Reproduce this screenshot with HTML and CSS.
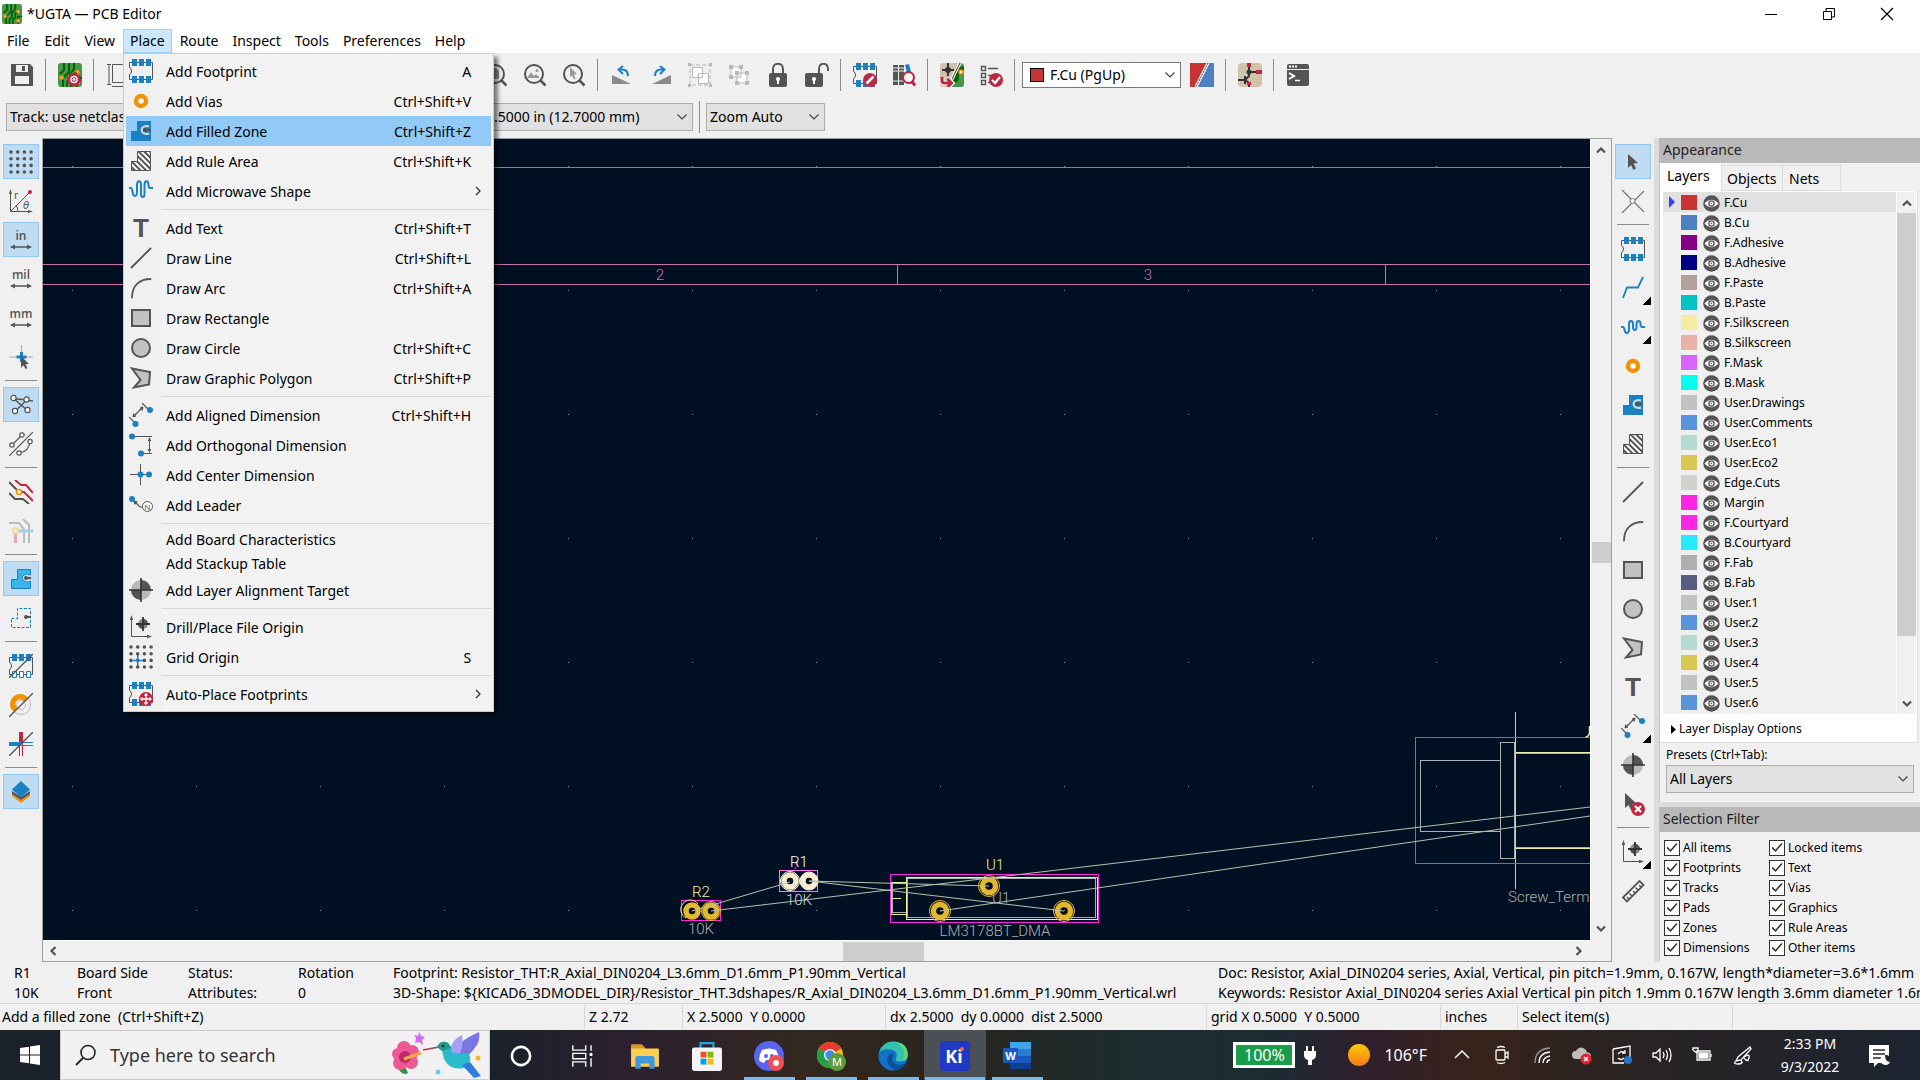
FILE: index.html
```html
<!DOCTYPE html>
<html lang="en">
<head>
<meta charset="utf-8">
<title>*UGTA — PCB Editor</title>
<link rel="stylesheet" href="styles.css">
</head>
<body>
<svg class="defs" aria-hidden="true">
  <defs>
    <pattern id="hatch" width="4" height="4" patternUnits="userSpaceOnUse" patternTransform="rotate(-45)"><rect width="4" height="4" fill="#fff"/><rect width="2" height="4" fill="#545454"/></pattern>
    <pattern id="griddots" x="29" y="27" width="124" height="124" patternUnits="userSpaceOnUse"><rect width="1" height="1" fill="#8a93a0"/></pattern>
  </defs>
  <symbol id="fp" viewBox="0 0 24 24"><path d="M.5 3.500H23.500V20.500H.5V15.500Q2.500 15 2.500 12T.5 8.500Z" fill="none" stroke="#545454"/><path fill="#1a81c4" d="M3 0h5v7H3zM10 0h5v7h-5zM17 0h5v7h-5zM3 17h5v7H3zM10 17h5v7h-5zM17 17h5v7h-5z"/></symbol>
  <symbol id="via" viewBox="0 0 24 24"><circle cx="12" cy="12" r="5" fill="#fff" stroke="#f39200" stroke-width="4.400"/></symbol>
  <symbol id="zone" viewBox="0 0 24 24"><path fill="#1a81c4" d="M2 12h6V2h14v20H2z"/><path d="M20 7.500a5 4 0 1 0 0 7" fill="none" stroke="#d5dbe0" stroke-width="2"/><circle cx="16" cy="11" r="2" fill="#545454"/><path d="M16 11h6" stroke="#545454" stroke-width="2"/></symbol>
  <symbol id="rule" viewBox="0 0 24 24"><path fill="url(#hatch)" stroke="#545454" d="M2.500 12.500h6v-10h13v19h-19z"/></symbol>
  <symbol id="wave" viewBox="0 0 24 24"><path fill="none" stroke="#1a81c4" stroke-width="2" d="M0 9h2c2 0 1 8 3.500 8S8 15 8 11V6c0-5 4-5 4 0v9c0 4 3.500 4 3.500 0V6c0-5 4-5 4 0v1c0 2 1 2 4.500 2"/></symbol>
  <symbol id="line" viewBox="0 0 24 24"><path d="M2.500 21.500l19-19" stroke="#545454" stroke-width="1.800" stroke-linecap="round"/></symbol>
  <symbol id="arc" viewBox="0 0 24 24"><path d="M3 21.500C3 9 11 3 21.500 3" fill="none" stroke="#545454" stroke-width="1.800" stroke-linecap="round"/></symbol>
  <symbol id="rect" viewBox="0 0 24 24"><path d="M3 4h18v16H3z" fill="#c2c2c2" stroke="#545454" stroke-width="2"/></symbol>
  <symbol id="circle" viewBox="0 0 24 24"><circle cx="12" cy="12" r="9" fill="#c2c2c2" stroke="#545454" stroke-width="2"/></symbol>
  <symbol id="poly" viewBox="0 0 24 24"><path d="M3 2.500L21 6l-1 12.500L5 21.500 11.500 14z" fill="#c2c2c2" stroke="#545454" stroke-width="2"/></symbol>
  <symbol id="dimA" viewBox="0 0 24 24"><path d="M4 14L14 4M0 14l7 7M13 0l7 7M4 14l1-3.500M4 14l3-1M14 4l-1 3.500M14 4l-3 1" fill="none" stroke="#545454" stroke-width="1.200"/><circle cx="21" cy="7" r="3" fill="#1a81c4"/><circle cx="6.500" cy="21" r="3" fill="#1a81c4"/></symbol>
  <symbol id="dimO" viewBox="0 0 24 24"><path d="M3 3.500h20M12 20.500h11" stroke="#545454"/><path d="M20.500 5v14" stroke="#545454"/><path d="M20.500 4l-1.800 4h3.600zM20.500 20l-1.800-4h3.600z" fill="#545454"/><circle cx="3" cy="3.500" r="3" fill="#1a81c4"/><circle cx="12" cy="20.500" r="3" fill="#1a81c4"/></symbol>
  <symbol id="dimC" viewBox="0 0 24 24"><path d="M11.500 1v21M1 11.500h20" stroke="#545454"/><circle cx="11.500" cy="11.500" r="3" fill="#1a81c4"/><circle cx="20" cy="11.500" r="3" fill="#1a81c4"/></symbol>
  <symbol id="target" viewBox="0 0 24 24"><circle cx="12" cy="12" r="10" fill="#b9b9b9"/><path fill="#545454" d="M12 2a10 10 0 0 1 10 10H12zM12 22A10 10 0 0 1 2 12h10z"/><path d="M12 0v24M0 12h24" stroke="#333" stroke-width="1.600"/></symbol>
  <symbol id="origin" viewBox="0 0 24 24"><path d="M2.500 2v19.500H21" fill="none" stroke="#545454"/><path d="M2.500 0L.800 5h3.400zM23 21.500l-5-1.700v3.400z" fill="#545454"/><circle cx="14" cy="9" r="5" fill="#8a8a8a"/><path d="M14 4a5 5 0 0 1 5 5h-5zM14 14a5 5 0 0 1-5-5h5z" fill="#545454"/><path d="M14 2v14M7 9h14" stroke="#333" stroke-width="1.800"/></symbol>
  <symbol id="dots" viewBox="0 0 24 24"><g stroke="#545454" stroke-width="3.600" stroke-linecap="round" stroke-dasharray="0 6.700"><path d="M2 2h21M2 8.700h21M2 15.400h21M2 22h21"/></g></symbol>
  <symbol id="gridorigin" viewBox="0 0 24 24"><g stroke="#545454" stroke-width="3.600" stroke-linecap="round" stroke-dasharray="0 6.700"><path d="M2 2h21M2 8.700h21M2 15.400h21M2 22h21"/></g><path d="M8.700 10v11M3.500 15.400h10.500" stroke="#1a81c4" stroke-width="1.500"/></symbol>
  <symbol id="autoplace" viewBox="0 0 24 24"><use href="#fp"/><circle cx="17" cy="17" r="7" fill="#bf2641"/><path d="M17 12v10M12 17h10M15.500 13.500L17 12l1.500 1.500M15.500 20.500L17 22l1.500-1.500M13.500 15.500L12 17l1.500 1.500M20.500 15.500L22 17l-1.500 1.500" stroke="#fff" stroke-width="1.300" fill="none"/></symbol>
  <symbol id="arrow" viewBox="0 0 24 24"><path fill="#545454" d="M7 4l10 9-4.500.6 2.500 5-2.600 1.300-2.300-5L7 18z"/></symbol>
  <symbol id="mag" viewBox="0 0 24 24"><circle cx="11" cy="11" r="9" fill="none" stroke="#545454" stroke-width="2"/><path d="M17.500 17.500l5 5" stroke="#545454" stroke-width="2.500"/></symbol>
  <symbol id="pcb" viewBox="0 0 24 24"><rect width="24" height="24" rx="3" fill="#489648"/><path d="M6 0v7L2 11M11 0v9l-6 6v9M16 0v6l-4 5v5l-3 3v5M22 8l-6 3v5l-3 3v5M24 15h-5v9" fill="none" stroke="#006400" stroke-width="2"/><g fill="#fff" stroke="#d38b12" stroke-width="1.800"><circle cx="3.500" cy="14.500" r="1.700"/><circle cx="19.500" cy="9" r="1.700"/><circle cx="19.500" cy="20" r="1.700"/></g></symbol>
  <symbol id="eye" viewBox="0 0 17 17"><circle cx="8.500" cy="8.500" r="8.300" fill="#545454"/><path d="M1.500 8.500Q8.500 1 15.500 8.500 8.500 16 1.500 8.500z" fill="#fff"/><circle cx="8.500" cy="8.500" r="2.600" fill="#fff" stroke="#545454" stroke-width="1.300"/><circle cx="8.500" cy="8.500" r=".8" fill="#545454"/></symbol>
  <symbol id="down" viewBox="0 0 12 12"><path d="M1.500 3.500L6 8l4.500-4.500" fill="none" stroke="#444" stroke-width="1.200"/></symbol>
  <symbol id="sb" viewBox="0 0 12 12"><path d="M2 3.500L6 7.500l4-4" fill="none" stroke="#505050" stroke-width="2.200"/></symbol>
  <symbol id="arrows" viewBox="0 0 24 24"><path d="M3 19h18" stroke="#545454" stroke-width="1.500"/><path d="M1 19l5-2.500v5zM23 19l-5-2.500v5z" fill="#545454"/></symbol>
</svg>

<div class="app">
<header class="titlebar">
  <svg class="appicon"><use href="#pcb"/></svg>
  <h1>*UGTA — PCB Editor</h1>
  <button aria-label="Minimize"><svg viewBox="0 0 14 14"><path d="M1 7.500h12" stroke="#000"/></svg></button>
  <button aria-label="Restore"><svg viewBox="0 0 14 14"><path d="M1.500 4.500h8v8h-8zM4 4.500V1.500h8.500v8.500H10" fill="none" stroke="#000"/></svg></button>
  <button aria-label="Close"><svg viewBox="0 0 14 14"><path d="M1 1l12 12M13 1L1 13" stroke="#000" stroke-width="1.200"/></svg></button>
</header>

<nav class="menubar">
  <button>File</button><button>Edit</button><button>View</button>
  <div class="menuhost">
    <button class="open">Place</button>
    <div class="menu" role="menu">
      <button role="menuitem"><svg><use href="#fp"/></svg><span>Add Footprint</span><kbd>A</kbd></button>
      <button role="menuitem"><svg><use href="#via"/></svg><span>Add Vias</span><kbd>Ctrl+Shift+V</kbd></button>
      <button role="menuitem" class="hot"><svg><use href="#zone"/></svg><span>Add Filled Zone</span><kbd>Ctrl+Shift+Z</kbd></button>
      <button role="menuitem"><svg><use href="#rule"/></svg><span>Add Rule Area</span><kbd>Ctrl+Shift+K</kbd></button>
      <button role="menuitem" class="sub"><svg><use href="#wave"/></svg><span>Add Microwave Shape</span><svg class="more" viewBox="0 0 12 12"><path d="M4 2l4 4-4 4" fill="none" stroke="#333" stroke-width="1.300"/></svg></button>
      <hr>
      <button role="menuitem"><svg viewBox="0 0 24 24"><text class="bigt" x="12" y="21">T</text></svg><span>Add Text</span><kbd>Ctrl+Shift+T</kbd></button>
      <button role="menuitem"><svg><use href="#line"/></svg><span>Draw Line</span><kbd>Ctrl+Shift+L</kbd></button>
      <button role="menuitem"><svg><use href="#arc"/></svg><span>Draw Arc</span><kbd>Ctrl+Shift+A</kbd></button>
      <button role="menuitem"><svg><use href="#rect"/></svg><span>Draw Rectangle</span></button>
      <button role="menuitem"><svg><use href="#circle"/></svg><span>Draw Circle</span><kbd>Ctrl+Shift+C</kbd></button>
      <button role="menuitem"><svg><use href="#poly"/></svg><span>Draw Graphic Polygon</span><kbd>Ctrl+Shift+P</kbd></button>
      <hr>
      <button role="menuitem"><svg><use href="#dimA"/></svg><span>Add Aligned Dimension</span><kbd>Ctrl+Shift+H</kbd></button>
      <button role="menuitem"><svg><use href="#dimO"/></svg><span>Add Orthogonal Dimension</span></button>
      <button role="menuitem"><svg><use href="#dimC"/></svg><span>Add Center Dimension</span></button>
      <button role="menuitem"><svg viewBox="0 0 24 24"><path d="M5 8l6 6h3M5 8l1 3.500M5 8l3.500 1" fill="none" stroke="#545454" stroke-width="1.200"/><circle cx="3" cy="6" r="3" fill="#1a81c4"/><circle cx="18.500" cy="13.500" r="5" fill="#fff" stroke="#545454"/><text x="18.500" y="16.500" text-anchor="middle" font-family="Liberation Sans, sans-serif" font-size="8" fill="#545454">N</text></svg><span>Add Leader</span></button>
      <hr>
      <button role="menuitem" class="plain"><svg></svg><span>Add Board Characteristics</span></button>
      <button role="menuitem" class="plain"><svg></svg><span>Add Stackup Table</span></button>
      <button role="menuitem"><svg><use href="#target"/></svg><span>Add Layer Alignment Target</span></button>
      <hr>
      <button role="menuitem"><svg><use href="#origin"/></svg><span>Drill/Place File Origin</span></button>
      <button role="menuitem"><svg><use href="#gridorigin"/></svg><span>Grid Origin</span><kbd>S</kbd></button>
      <hr>
      <button role="menuitem" class="sub"><svg><use href="#autoplace"/></svg><span>Auto-Place Footprints</span><svg class="more" viewBox="0 0 12 12"><path d="M4 2l4 4-4 4" fill="none" stroke="#333" stroke-width="1.300"/></svg></button>
    </div>
  </div>
  <button>Route</button><button>Inspect</button><button>Tools</button><button>Preferences</button><button>Help</button>
</nav>

<div class="toolbar">
  <button aria-label="Save"><svg viewBox="0 0 24 24"><path fill="#545454" d="M1 1h19l3 3v19H1z"/><path fill="#f0f0f0" d="M6 2h12v7H6zM5 13h14v8H5z"/><path fill="#545454" d="M12 3h3v5h-3z"/></svg></button>
  <i class="sep"></i>
  <button aria-label="Board setup"><svg viewBox="0 0 24 24"><use href="#pcb"/><circle cx="16" cy="16.500" r="5" fill="#fff" stroke="#bf2641" stroke-width="2.500"/><circle cx="16" cy="16.500" r="6.500" fill="none" stroke="#bf2641" stroke-width="2" stroke-dasharray="2.500 2.600"/><circle cx="16" cy="16.500" r="2" fill="#f0f0f0" stroke="#bf2641"/></svg></button>
  <i class="sep"></i>
  <button aria-label="Page settings"><svg viewBox="0 0 24 24"><path d="M1 1.500h4M3 1.500v20M1 21.500h4M6.500 1.500h10l5 5v13h-15zM6 23.500h16" fill="none" stroke="#545454"/></svg></button>
  <button aria-label="Print"><svg><use href="#rect"/></svg></button>
  <button aria-label="Plot"><svg><use href="#rect"/></svg></button>
  <i class="sep"></i>
  <button aria-label="Undo"><svg><use href="#arc"/></svg></button>
  <button aria-label="Redo"><svg><use href="#arc"/></svg></button>
  <i class="sep"></i>
  <button aria-label="Find"><svg><use href="#mag"/></svg></button>
  <i class="sep"></i>
  <button aria-label="Refresh"><svg><use href="#circle"/></svg></button>
  <button aria-label="Zoom in"><svg><use href="#mag"/></svg></button>
  <button aria-label="Zoom out"><svg><use href="#mag"/></svg></button>
  <button aria-label="Zoom to fit"><svg viewBox="0 0 24 24"><use href="#mag"/><path fill="#8a8a8a" d="M7 5h5l3 3v8H7z"/></svg></button>
  <button aria-label="Zoom to objects"><svg viewBox="0 0 24 24"><use href="#mag"/><path fill="#999" d="M4 15l4-6 3 4 2-2 4 4z"/><circle cx="14" cy="7.500" r="1.500" fill="#999"/></svg></button>
  <button aria-label="Zoom to selection"><svg viewBox="0 0 24 24"><use href="#mag"/><path fill="#999" d="M8 4l7 7-3 .4 1.600 4-1.800.8-1.700-3.800L8 14z"/></svg></button>
  <i class="sep"></i>
  <button aria-label="Rotate counterclockwise"><svg viewBox="0 0 24 24"><path fill="#8a8a8a" d="M2 12v9h19z"/><path d="M18 13C18 7 14 6 10 6.500" fill="none" stroke="#1a81c4" stroke-width="2"/><path fill="none" stroke="#1a81c4" stroke-width="2" d="M13 3L8.500 6.500 13 11"/></svg></button>
  <button aria-label="Rotate clockwise"><svg viewBox="0 0 24 24"><path fill="#8a8a8a" d="M22 12v9H3z"/><path d="M6 13C6 7 10 6 14 6.500" fill="none" stroke="#1a81c4" stroke-width="2"/><path fill="none" stroke="#1a81c4" stroke-width="2" d="M11 3l4.500 3.500L11 11"/></svg></button>
  <button aria-label="Group"><svg viewBox="0 0 24 24"><path d="M2 2h20v20H2z" fill="none" stroke="#b9b9b9" stroke-dasharray="4 2"/><path d="M4.500 4.500h10v10h-10zM10.500 10.500h10v10h-10z" fill="#fff" stroke="#b9b9b9"/><path fill="#b9b9b9" d="M0 0h3v3H0zM21 0h3v3h-3zM0 21h3v3H0zM21 21h3v3h-3z"/></svg></button>
  <button aria-label="Ungroup"><svg viewBox="0 0 24 24"><path d="M4 4h10v10H4zM10 10h10v10H10z" fill="#fff" stroke="#b9b9b9"/><path fill="#b9b9b9" d="M2 2h4v4H2zM12 2h4v4h-4zM2 12h4v4H2zM8 8h4v4H8zM18 8h4v4h-4zM8 18h4v4H8zM18 18h4v4h-4z"/></svg></button>
  <button aria-label="Lock"><svg viewBox="0 0 24 24"><rect x="3" y="10" width="18" height="14" rx="2" fill="#545454"/><path d="M7 11V6c0-7 10-7 10 0v5" fill="none" stroke="#545454" stroke-width="2"/><circle cx="12" cy="16" r="2" fill="#fff"/><path d="M12 16v5" stroke="#fff" stroke-width="2"/></svg></button>
  <button aria-label="Unlock"><svg viewBox="0 0 24 24"><rect x="0" y="10" width="18" height="14" rx="2" fill="#545454"/><path d="M14 11V6c0-7 9-7 9 0v2" fill="none" stroke="#545454" stroke-width="2"/><circle cx="9" cy="16" r="2" fill="#fff"/><path d="M9 16v5" stroke="#fff" stroke-width="2"/></svg></button>
  <i class="sep"></i>
  <button aria-label="Footprint editor"><svg viewBox="0 0 24 24"><use href="#fp"/><circle cx="17" cy="17" r="7" fill="#bf2641"/><path d="M13.500 20.500l7-7" stroke="#fff" stroke-width="2.500"/></svg></button>
  <button aria-label="Footprint browser"><svg viewBox="0 0 24 24"><path fill="#545454" d="M1 2h5v20H1zM7 2h5v20H7z"/><path fill="#1a81c4" d="M13 2l4-1 5 19-4 1z"/><path d="M1 5h11M1 8h11M1 18h11" stroke="#f0f0f0"/><circle cx="16.500" cy="14.500" r="5.500" fill="#f5f5f5" stroke="#bf2641" stroke-width="2"/><path d="M20 18.500l3 4" stroke="#bf2641" stroke-width="3"/></svg></button>
  <i class="sep"></i>
  <button aria-label="Update from schematic"><svg viewBox="0 0 24 24"><rect width="24" height="24" rx="3" fill="#d0c3ab"/><path d="M24 2v19a3 3 0 0 1-3 3H9L21 0z" fill="#489648"/><path d="M24 5l-7 3v8l-4 4" stroke="#006400" stroke-width="4" fill="none"/><path d="M8 0v13M2 7h12" stroke="#333" stroke-width="2"/><circle cx="8" cy="7" r="3" fill="#333"/><path d="M20 0L8 24" stroke="#fff" stroke-width="3"/><path d="M20 0L8 24" stroke="#333"/><circle cx="21" cy="9" r="2" fill="#fff" stroke="#f39200" stroke-width="1.600"/><path d="M2 15v3q0 2 3 2h6M8 16l4 4-4 4" stroke="#fff" stroke-width="5" fill="none"/><path d="M2 14v4q0 2 3 2h6M7.500 16l4 4-4 4" stroke="#bf2641" stroke-width="3" fill="none"/></svg></button>
  <button aria-label="Design rules checker"><svg viewBox="0 0 24 24"><path d="M2.500 3.500h4v4h-4zM2.500 10.500h4v4h-4zM2.500 17.500h4v4h-4zM9 5.500h10M9 12.500h6M9 19.500h3" fill="none" stroke="#545454" stroke-width="1.400"/><circle cx="17" cy="17" r="7" fill="#bf2641"/><path d="M13 17l3 3 5-6" fill="none" stroke="#fff" stroke-width="2.200"/></svg></button>
  <i class="sep"></i>
  <label class="combo layer"><i class="chip"></i><select aria-label="Active layer"><option>F.Cu (PgUp)</option></select><svg><use href="#down"/></svg></label>
  <button aria-label="Layer pair"><svg viewBox="0 0 24 24"><path fill="#c83434" d="M0 0h18L6 24H0z"/><path fill="#4d7fc4" d="M18 0h6v24H6z"/><path d="M18 0L6 24" stroke="#fff" stroke-width="3"/><path d="M18 0L6 24" stroke="#333" stroke-dasharray="2 1"/></svg></button>
  <i class="sep"></i>
  <button aria-label="Schematic editor"><svg viewBox="0 0 24 24"><rect width="24" height="24" rx="4" fill="#d0c3ab"/><path d="M11 0v9M11 9h8M11 9v4l-4 4H0M7 13v8M7 17l4 3v4" stroke="#333" stroke-width="2" fill="none"/><circle cx="11" cy="9" r="2.500" fill="#333"/><path fill="#bf2641" d="M9 0h4v4H9zM18 7h6v4h-6zM9 19h4v3H9z"/></svg></button>
  <i class="sep"></i>
  <button aria-label="Scripting console"><svg viewBox="0 0 24 24"><path fill="#545454" d="M1 3q0-2 2-2h18q2 0 2 2v3H1zM1 7h22v14q0 2-2 2H3q-2 0-2-2z"/><path d="M3 3.500h8" stroke="#fff" stroke-width="2" stroke-dasharray="2 1"/><path d="M3 10l5 3-5 3" fill="none" stroke="#fff" stroke-width="2"/><path d="M9 17.500h5" stroke="#fff" stroke-width="1.500"/></svg></button>
</div>

<div class="toolbar second">
  <label class="combo track"><select aria-label="Track width"><option>Track: use netclass width</option></select><svg><use href="#down"/></svg></label>
  <label class="combo viasize"><select aria-label="Via size"><option>Via: use netclass sizes</option></select><svg><use href="#down"/></svg></label>
  <button aria-label="Automatic track width"><svg><use href="#line"/></svg></button>
  <i class="sep"></i>
  <label class="combo gridsize"><select aria-label="Grid"><option>0.5000 in (12.7000 mm)</option></select><svg><use href="#down"/></svg></label>
  <i class="sep"></i>
  <label class="combo zoom"><select aria-label="Zoom"><option>Zoom Auto</option></select><svg><use href="#down"/></svg></label>
</div>

<main class="workspace">
  <aside class="tools">
    <button class="on" aria-label="Show grid"><svg><use href="#dots"/></svg></button>
    <button aria-label="Polar coordinates"><svg viewBox="0 0 24 24"><path d="M1.500 2v20.500H22M2 22L20 4M9 22.500q0-4-2-6" fill="none" stroke="#545454"/><path d="M1.500 0L0 5h3zM24 22.500l-5-1.500v3z" fill="#545454"/><circle cx="21" cy="3" r="2" fill="#bf2641"/><text x="5" y="10" font-family="DejaVu Sans, sans-serif" font-size="10" fill="#545454">r</text><text x="14" y="20" font-family="DejaVu Sans, sans-serif" font-size="10" font-style="italic" fill="#545454">θ</text></svg></button>
    <button class="on" aria-label="Inches"><svg viewBox="0 0 24 24"><text class="unit" x="12" y="12">in</text><use href="#arrows"/></svg></button>
    <button aria-label="Mils"><svg viewBox="0 0 24 24"><text class="unit" x="12" y="12">mil</text><use href="#arrows"/></svg></button>
    <button aria-label="Millimeters"><svg viewBox="0 0 24 24"><text class="unit" x="12" y="12">mm</text><use href="#arrows"/></svg></button>
    <button aria-label="Full-window crosshairs"><svg viewBox="0 0 24 24"><path d="M12.500 0v23M0 12h24" stroke="#aaa"/><path d="M12.500 7v10M7.500 12h10" stroke="#1a81c4" stroke-width="3"/><path fill="#545454" d="M12 11l8 8-3.500.3 2 4-2 .7-1.800-3.500L12 22z"/></svg></button>
    <i class="sep"></i>
    <button class="on" aria-label="Show ratsnest"><svg viewBox="0 0 24 24"><path d="M4.500 5.500L17.500 7l7 1M17.500 7L6 18.500M4.500 5.500L18.500 17.500" stroke="#545454" stroke-width="1.400"/><g fill="#fff" stroke="#545454" stroke-width="1.200"><circle cx="4.500" cy="5" r="2.600"/><circle cx="17.500" cy="6.500" r="2.600"/><circle cx="6" cy="18" r="2.600"/><circle cx="18.500" cy="17" r="2.600"/></g></svg></button>
    <button aria-label="Curved ratsnest"><svg viewBox="0 0 24 24"><path d="M0 24L24 0M3 13L13 3M10 21Q20 20 21 9" fill="none" stroke="#545454" stroke-width="1.200"/><g fill="#fff" stroke="#545454" stroke-width="1.200"><circle cx="3" cy="13" r="2.200"/><circle cx="13" cy="3" r="2.200"/><circle cx="21" cy="9.500" r="2.200"/><circle cx="10" cy="21" r="2.200"/></g></svg></button>
    <i class="sep"></i>
    <button aria-label="High contrast layers"><svg viewBox="0 0 24 24"><g fill="none" stroke-width="2"><path d="M0 2l10 10M0 13l6 6h8l6 5" stroke="#545454"/><path d="M6 0l6 5h5l7 8M10 12h5l9 9" stroke="#bf2641"/></g><circle cx="10" cy="12" r="2.500" fill="#fff" stroke="#f39200" stroke-width="1.600"/></svg></button>
    <button aria-label="Net highlight"><svg viewBox="0 0 24 24"><g fill="none" stroke-width="2" stroke="#bbb"><path d="M0 4h10l5 6v14M14 0l6 6v18"/><path d="M7 12h17" stroke="#a2cfea" stroke-width="3"/><path d="M6.500 13v11" stroke="#e9a7b3" stroke-width="3"/></g><circle cx="6.500" cy="11.500" r="2.500" fill="#fff" stroke="#fad399" stroke-width="2"/></svg></button>
    <i class="sep"></i>
    <button class="on" aria-label="Fill zones"><svg viewBox="0 0 24 24"><path fill="#39b4ea" stroke="#1a81c4" d="M2.500 12.500h6v-10h13v5.500a5 4 0 1 0 0 6v7.500h-19z"/><circle cx="17" cy="11" r="2" fill="#545454"/><path d="M17 11h5" stroke="#545454" stroke-width="2"/></svg></button>
    <button aria-label="Zone outlines"><svg viewBox="0 0 24 24"><path fill="none" stroke="#1a81c4" stroke-dasharray="3 1.500" d="M2.500 12.500h6v-10h13v19h-19z"/><circle cx="17" cy="11" r="2" fill="#545454"/><path d="M17 11h5" stroke="#545454" stroke-width="2"/></svg></button>
    <i class="sep"></i>
    <button aria-label="Sketch pads"><svg viewBox="0 0 24 24"><path d="M.5 3.500H23.500V20.500H.5V15.500Q2.500 15 2.500 12T.5 8.500Z" fill="none" stroke="#545454"/><path fill="#1a81c4" d="M3 0h5v7H3zM10 0h5v7h-5zM17 0h5v7h-5z"/><path fill="#fff" stroke="#1a81c4" d="M3.500 17.500h4v6h-4zM10.500 17.500h4v6h-4zM17.500 17.500h4v6h-4z"/><path d="M0 24L24 0" stroke="#545454" stroke-width="1.300"/></svg></button>
    <button aria-label="Sketch vias"><svg viewBox="0 0 24 24"><circle cx="12" cy="12" r="9.500" fill="none" stroke="#bbb"/><circle cx="12" cy="12" r="4.500" fill="none" stroke="#bbb"/><path d="M5 19A10 10 0 1 1 19 5l-4 4a4.500 4.500 0 1 0-6 6z" fill="#f39200"/><path d="M0 24L24 0" stroke="#545454" stroke-width="1.300"/></svg></button>
    <button aria-label="Sketch tracks"><svg viewBox="0 0 24 24"><path d="M12 0v12" stroke="#bf2641" stroke-width="4"/><path d="M10.500 12v12M13.500 12v12" stroke="#bf2641"/><path d="M0 12h12" stroke="#1a81c4" stroke-width="4"/><path d="M12 10.500h12M12 13.500h12" stroke="#1a81c4"/><path d="M0 24L24 0" stroke="#545454" stroke-width="1.300"/></svg></button>
    <i class="sep"></i>
    <button class="on" aria-label="Appearance manager"><svg viewBox="0 0 24 24"><path fill="#f39200" d="M3 14v2l9 7 9-7v-2l-9 6z"/><path fill="#545454" d="M3 11v3l9 6 9-6v-3l-9 6z"/><path fill="#1a81c4" d="M12 1l9 8.500-9 8-9-8z"/></svg></button>
  </aside>

  <section class="view">
    <svg class="board" role="img" aria-label="Board canvas">
      <rect width="100%" height="100%" fill="url(#griddots)"/>
      <g transform="translate(-43 -139)" fill="none" shape-rendering="crispEdges">
        <path d="M43 167.500H3000" stroke="#7f8790"/>
        <path d="M43 264.500H3000M43 284.500H3000M897.500 264v20M1385.500 264v20" stroke="#c872a0"/>
      </g>
      <g transform="translate(-43 -139)" fill="none">
        <g class="silk" text-anchor="middle"><text x="660" y="280" fill="#c872a0">2</text><text x="1148" y="280" fill="#c872a0">3</text></g>
        <g shape-rendering="crispEdges">
          <path d="M1500 760.500h-79.500v71H1500M1500.500 742.500h14v116h-14zM1516 753.500h400M1516 847.500h400" stroke="#afafaf"/>
          <path d="M1515.500 712v177" stroke="#c3ccd2"/>
          <path d="M1516 752.500h400M1516 848.500h400" stroke="#f2eda1"/>
          <path d="M1915 737.500h-499.500v126H1915" stroke="#e32bd6"/>
          <path d="M907.500 878.500h188v39h-188zM892.500 883.500h14v29h-14z" stroke="#afafaf"/>
          <path d="M906.500 877.500h191v42h-191zM891.500 882.500h15v32h-15zM892 898.500h9" stroke="#f2eda1"/>
          <path d="M890.500 874.500h208v48h-208zM681.500 900.500h39v20h-39z" stroke="#ff26e2"/>
          <path d="M779.500 870.500h38v21h-38z" stroke="#f67af0"/>
        </g>
        <g stroke="#e3b72e" stroke-width="5.500"><circle cx="692" cy="911" r="6"/><circle cx="711" cy="911" r="6"/><circle cx="940" cy="911" r="6.500"/><circle cx="989" cy="886" r="6.500"/><circle cx="1064" cy="911" r="6.500"/></g>
        <g stroke="#e3b72e"><circle cx="711" cy="911" r="9.500"/><circle cx="940" cy="911" r="10.500"/><circle cx="989" cy="886" r="10.500"/><circle cx="1064" cy="911" r="10.500"/></g>
        <path d="M686 918a9.500 9.500 0 1 1 12-14" stroke="#f2eda1"/>
        <g stroke="#fbeccb" stroke-width="5.500"><circle cx="790" cy="881" r="6"/><circle cx="809" cy="881" r="6"/></g>
        <g stroke="#fff"><circle cx="790" cy="881" r="9.500"/><circle cx="809" cy="881" r="9"/></g>
        <path d="M798 862l-4 9M794 890l4 8" stroke="#ff26e2" stroke-dasharray="3 2"/>
        <path d="M692 911l98-29M711 911L1590 807l340-40M940 911l650-95 340-49M809 881l180 5M809 881l255 30" stroke="#b4c2ac"/>
        <path d="M1589.500 726v7q-1 4-4 4" stroke="#f2eda1" stroke-width="1.500"/>
        <g class="silk" text-anchor="middle">
          <text x="701" y="897" fill="#f2eda1">R2</text><text x="701" y="934" fill="#afafaf">10K</text>
          <text x="799" y="867" fill="#fff">R1</text><text x="799" y="905" fill="#d8d8d8">10K</text>
          <text x="995" y="870" fill="#f2eda1">U1</text><text x="1001" y="903" fill="#afafaf">U1</text>
          <text x="995" y="936" fill="#afafaf">LM3178BT_DMA</text>
        </g>
        <text class="silk" x="1508" y="902" fill="#afafaf">Screw_Term</text>
      </g>
    </svg>
    <div class="vbar"><svg class="up"><use href="#sb"/></svg><i></i><svg><use href="#sb"/></svg></div>
    <div class="hbar"><svg class="left"><use href="#sb"/></svg><i></i><svg class="right"><use href="#sb"/></svg></div>
  </section>

  <aside class="tools">
    <button class="on" aria-label="Select"><svg><use href="#arrow"/></svg></button>
    <button aria-label="Local ratsnest"><svg viewBox="0 0 24 24"><path d="M1 1l22 22M23 2L1 24" stroke="#777" stroke-width="1.200"/><circle cx="11.500" cy="12" r="2.500" fill="#fff" stroke="#777"/></svg></button>
    <i class="sep"></i>
    <button aria-label="Add footprint"><svg><use href="#fp"/></svg></button>
    <button class="fly" aria-label="Route tracks"><svg viewBox="0 0 24 24"><path d="M2 22l4-10.500h11L22 1" fill="none" stroke="#1a81c4" stroke-width="1.800"/></svg></button>
    <button class="fly" aria-label="Tune length"><svg viewBox="0 0 24 24"><path fill="none" stroke="#1a81c4" stroke-width="2" d="M0 12h2c2 0 1 6 3.500 6S8 16 8 13V9c0-4 4-4 4 0v3c0 4 3.500 4 3.500 0V9c0-4 4-4 4 0v1c0 2 1 2 4.500 2"/></svg></button>
    <button aria-label="Add vias"><svg><use href="#via"/></svg></button>
    <button aria-label="Add filled zone"><svg><use href="#zone"/></svg></button>
    <button aria-label="Add rule area"><svg><use href="#rule"/></svg></button>
    <i class="sep"></i>
    <button aria-label="Draw line"><svg><use href="#line"/></svg></button>
    <button aria-label="Draw arc"><svg><use href="#arc"/></svg></button>
    <button aria-label="Draw rectangle"><svg><use href="#rect"/></svg></button>
    <button aria-label="Draw circle"><svg><use href="#circle"/></svg></button>
    <button aria-label="Draw polygon"><svg><use href="#poly"/></svg></button>
    <button aria-label="Add text"><svg viewBox="0 0 24 24"><text class="bigt" x="12" y="21">T</text></svg></button>
    <button class="fly" aria-label="Add dimension"><svg><use href="#dimA"/></svg></button>
    <button aria-label="Add alignment target"><svg><use href="#target"/></svg></button>
    <button aria-label="Delete"><svg viewBox="0 0 24 24"><path fill="#545454" d="M4 1l12 11-5 .5 2 4-3 1.500-2.500-5L4 16z"/><circle cx="17" cy="17" r="7" fill="#bf2641"/><path d="M14 14l6 6M20 14l-6 6" stroke="#fff" stroke-width="2.200"/></svg></button>
    <i class="sep"></i>
    <button class="fly" aria-label="Set origin"><svg><use href="#origin"/></svg></button>
    <button aria-label="Measure"><svg viewBox="0 0 24 24"><path d="M2 18.500L18.500 2 22.500 6 6 22.500z" fill="#fff" stroke="#545454" stroke-width="1.800"/><path d="M8 20l-2-2M11 17l-2.500-2.500M14 14l-2-2M17 11l-2.500-2.500M20 8l-2-2" stroke="#545454" stroke-width="1.500"/></svg></button>
  </aside>

  <aside class="dock">
    <h2>Appearance</h2>
    <div class="appearance">
      <div class="tabs" role="tablist"><button role="tab" class="sel">Layers</button><button role="tab">Objects</button><button role="tab">Nets</button></div>
      <div class="page">
        <div class="listbox">
          <ul class="layers">
            <li class="cur"><i style="background:#c83434"></i><svg><use href="#eye"/></svg>F.Cu</li>
            <li><i style="background:#4d7fc4"></i><svg><use href="#eye"/></svg>B.Cu</li>
            <li><i style="background:#840084"></i><svg><use href="#eye"/></svg>F.Adhesive</li>
            <li><i style="background:#000084"></i><svg><use href="#eye"/></svg>B.Adhesive</li>
            <li><i style="background:#b4a09a"></i><svg><use href="#eye"/></svg>F.Paste</li>
            <li><i style="background:#00c2c2"></i><svg><use href="#eye"/></svg>B.Paste</li>
            <li><i style="background:#f2eda1"></i><svg><use href="#eye"/></svg>F.Silkscreen</li>
            <li><i style="background:#e8b2a7"></i><svg><use href="#eye"/></svg>B.Silkscreen</li>
            <li><i style="background:#d864ff"></i><svg><use href="#eye"/></svg>F.Mask</li>
            <li><i style="background:#02ffee"></i><svg><use href="#eye"/></svg>B.Mask</li>
            <li><i style="background:#c2c2c2"></i><svg><use href="#eye"/></svg>User.Drawings</li>
            <li><i style="background:#5994dc"></i><svg><use href="#eye"/></svg>User.Comments</li>
            <li><i style="background:#b4dbd2"></i><svg><use href="#eye"/></svg>User.Eco1</li>
            <li><i style="background:#d8c852"></i><svg><use href="#eye"/></svg>User.Eco2</li>
            <li><i style="background:#d0d2cd"></i><svg><use href="#eye"/></svg>Edge.Cuts</li>
            <li><i style="background:#ff26e2"></i><svg><use href="#eye"/></svg>Margin</li>
            <li><i style="background:#ff26e2"></i><svg><use href="#eye"/></svg>F.Courtyard</li>
            <li><i style="background:#26e9ff"></i><svg><use href="#eye"/></svg>B.Courtyard</li>
            <li><i style="background:#afafaf"></i><svg><use href="#eye"/></svg>F.Fab</li>
            <li><i style="background:#585d84"></i><svg><use href="#eye"/></svg>B.Fab</li>
            <li><i style="background:#c2c2c2"></i><svg><use href="#eye"/></svg>User.1</li>
            <li><i style="background:#5994dc"></i><svg><use href="#eye"/></svg>User.2</li>
            <li><i style="background:#b4dbd2"></i><svg><use href="#eye"/></svg>User.3</li>
            <li><i style="background:#d8c852"></i><svg><use href="#eye"/></svg>User.4</li>
            <li><i style="background:#c2c2c2"></i><svg><use href="#eye"/></svg>User.5</li>
            <li><i style="background:#5994dc"></i><svg><use href="#eye"/></svg>User.6</li>
          </ul>
          <div class="lbar"><svg class="up"><use href="#sb"/></svg><i></i><svg><use href="#sb"/></svg></div>
        </div>
        <button class="expander"><svg viewBox="0 0 5 9"><path d="M0 0l5 4.500L0 9z"/></svg>Layer Display Options</button>
      </div>
      <label class="presetlabel" for="preset">Presets (Ctrl+Tab):</label>
      <div class="combo preset"><select id="preset"><option>All Layers</option></select><svg><use href="#down"/></svg></div>
    </div>
    <h2 class="filterhead">Selection Filter</h2>
    <div class="filter">
      <label><input type="checkbox" checked>All items</label><label><input type="checkbox" checked>Locked items</label>
      <label><input type="checkbox" checked>Footprints</label><label><input type="checkbox" checked>Text</label>
      <label><input type="checkbox" checked>Tracks</label><label><input type="checkbox" checked>Vias</label>
      <label><input type="checkbox" checked>Pads</label><label><input type="checkbox" checked>Graphics</label>
      <label><input type="checkbox" checked>Zones</label><label><input type="checkbox" checked>Rule Areas</label>
      <label><input type="checkbox" checked>Dimensions</label><label><input type="checkbox" checked>Other items</label>
    </div>
  </aside>
</main>

<section class="info">
  <div>R1<br>10K</div>
  <div>Board Side<br>Front</div>
  <div>Status:<br>Attributes:</div>
  <div>Rotation<br>0</div>
  <div>Footprint: Resistor_THT:R_Axial_DIN0204_L3.6mm_D1.6mm_P1.90mm_Vertical<br>3D-Shape: ${KICAD6_3DMODEL_DIR}/Resistor_THT.3dshapes/R_Axial_DIN0204_L3.6mm_D1.6mm_P1.90mm_Vertical.wrl</div>
  <div>Doc: Resistor, Axial_DIN0204 series, Axial, Vertical, pin pitch=1.9mm, 0.167W, length*diameter=3.6*1.6mm<br>Keywords: Resistor Axial_DIN0204 series Axial Vertical pin pitch 1.9mm 0.167W length 3.6mm diameter 1.6mm</div>
</section>

<footer class="status"><span>Add a filled zone  (Ctrl+Shift+Z)</span><span>Z 2.72</span><span>X 2.5000  Y 0.0000</span><span>dx 2.5000  dy 0.0000  dist 2.5000</span><span>grid X 0.5000  Y 0.5000</span><span>inches</span><span>Select item(s)</span><span></span></footer>

<div class="taskbar">
  <button class="start" aria-label="Start"><svg viewBox="0 0 20 20"><path fill="#fff" d="M0 3l9-1.300V9.500H0zM10 1.500L20 0v9.500H10zM0 10.500h9v7.800L0 17zM10 10.500h10V20l-10-1.500z"/></svg></button>
  <label class="search"><svg class="glass" viewBox="0 0 22 22"><circle cx="13" cy="8.500" r="7" fill="none" stroke="#222" stroke-width="1.600"/><path d="M8.500 13.500L1 21" stroke="#222" stroke-width="1.800"/></svg><input type="text" placeholder="Type here to search" aria-label="Search">
    <svg class="bird" viewBox="0 0 96 48">
      <path fill="#3e8e4c" d="M4 34q6 12 12 8l-4-9z"/>
      <g fill="#ee5a94"><circle cx="12" cy="17" r="7"/><circle cx="20" cy="21" r="7"/><circle cx="19" cy="31" r="7"/><circle cx="8" cy="32" r="7"/><circle cx="6" cy="23" r="6"/></g>
      <circle cx="13" cy="26" r="6" fill="#c02a6c"/><path d="M12 28l17-6" stroke="#f5a94c" stroke-width="3"/>
      <path fill="#d26cf0" d="M27 1l2 4 4 1-3 3 1 5-4-3-4 1 1-5-2-3 4 1z"/>
      <path d="M31 19l16-3" stroke="#a33b66" stroke-width="1.500"/>
      <path fill="#7a76e4" d="M62 24q0-12 25-23 2 9-5 17-6 8-13 10z"/><path fill="#a7a0f5" d="M58 20Q60 8 70 4q2 12-3 20z"/>
      <path fill="#2bbccb" d="M45 16q4-8 11-4 4 3 4 9 8 3 16 1 6 8-4 15-14 3-20-9l-2-9z"/>
      <path fill="#1f9b8c" d="M45 16q4-8 11-4l3 5-9 3z"/><circle cx="51" cy="15" r="1.300" fill="#122"/>
      <path fill="#2f7de0" d="M70 34l8-3 11 14-7 2z"/><circle cx="86" cy="27" r="2.500" fill="#f7b52c"/><circle cx="46" cy="41" r="2.500" fill="#64cbe8"/>
    </svg>
  </label>
  <div class="apps">
    <button aria-label="Cortana"><svg viewBox="0 0 28 28"><circle cx="14" cy="14" r="8.500" fill="none" stroke="#fff" stroke-width="2.400"/></svg></button>
    <button aria-label="Task view"><svg viewBox="0 0 28 28"><path d="M4.500 4v4.500h12V4M4.500 24v-4.500h12V24M4.500 11.500h12v5h-12zM21.500 4v5M21.500 16v8" fill="none" stroke="#fff" stroke-width="1.300"/><circle cx="21.500" cy="12.500" r="1.500" fill="#fff"/></svg></button>
    <button aria-label="File Explorer"><svg viewBox="0 0 28 28"><path fill="#d99a1c" d="M1 4q0-1 1-1h9l3 3v5H1z"/><path fill="#fccf53" d="M1 7h25q1 0 1 1v16H1z"/><path fill="#3f97dc" d="M5 26V16q0-2 2-2h14q2 0 2 2v10h-5v-5h-8v5z"/></svg></button>
    <button aria-label="Microsoft Store"><svg viewBox="0 0 28 28"><path d="M8 7V2h12v5" fill="none" stroke="#23a5e8" stroke-width="2"/><rect x="0" y="6" width="28" height="22" rx="2" fill="#f4f4f4"/><path fill="#f25022" d="M8 10h5.500v5.500H8z"/><path fill="#7fba00" d="M14.500 10H20v5.500h-5.500z"/><path fill="#00a4ef" d="M8 16.500h5.500V22H8z"/><path fill="#ffb900" d="M14.500 16.500H20V22h-5.500z"/></svg></button>
    <button class="run" aria-label="Discord"><svg viewBox="0 0 30 30"><circle cx="15" cy="15" r="15" fill="#5865f2"/><path fill="#fff" d="M8 9q7-3 14 0 3 5 3 10-3 3-5 3l-2-3h-6l-2 3q-3 0-5-3 0-5 3-10z"/><circle cx="12" cy="15" r="2" fill="#5865f2"/><circle cx="18" cy="15" r="2" fill="#5865f2"/><circle cx="22" cy="22" r="8" fill="#f04f54"/><circle cx="22" cy="22" r="3" fill="#fff"/></svg></button>
    <button class="run" aria-label="Chrome"><svg viewBox="0 0 30 30"><circle cx="14" cy="14" r="13" fill="#fbc116"/><path fill="#e33b2e" d="M14 14L2.700 7.500a13 13 0 0 1 22.600 0z"/><path fill="#229e4b" d="M14 14L2.700 7.500A13 13 0 0 0 14 27z"/><circle cx="14" cy="14" r="6" fill="#fff"/><circle cx="14" cy="14" r="4.700" fill="#4285f4"/><circle cx="21" cy="21" r="9" fill="#5f9a3b"/><text x="21" y="25" text-anchor="middle" font-family="Noto Sans, sans-serif" font-size="11" fill="#fff">M</text></svg></button>
    <button class="run" aria-label="Edge"><svg viewBox="0 0 30 30"><circle cx="15" cy="15" r="14.500" fill="#1271c9"/><path fill="#35c1b1" d="M1 12Q4 0 16 .5q13 1 14 13 0 7-8 7-5 0-4-3 3-7-5-9Q4 7 1 12z"/><path fill="#62d86a" d="M18 1q12 2 11.500 13-1 5-5 6Q30 8 18 1z"/><path fill="#0c4f9b" d="M10 15q-3 10 8 14 7-1 10-7-9 4-13-1-2-4 1-7-4-3-6 1z"/></svg></button>
    <button class="run active" aria-label="KiCad"><svg viewBox="0 0 30 30"><rect width="30" height="30" rx="4" fill="#2138c5"/><text x="14" y="22" text-anchor="middle" font-family="Noto Sans, sans-serif" font-weight="700" font-size="18" fill="#fff">Ki</text><circle cx="22" cy="8" r="2" fill="#f56a1e"/></svg></button>
    <button class="run" aria-label="Word"><svg viewBox="0 0 30 30"><path fill="#41a5ee" d="M8 1h21v7H8z"/><path fill="#2b7cd3" d="M8 8h21v7H8z"/><path fill="#185abd" d="M8 15h21v7H8z"/><path fill="#103f91" d="M8 22h21v6H8z"/><rect x="1" y="7" width="15" height="15" rx="1" fill="#185abd"/><text x="8.500" y="19" text-anchor="middle" font-family="Noto Sans, sans-serif" font-weight="700" font-size="11" fill="#fff">W</text></svg></button>
  </div>
  <div class="tray">
    <span class="battery">100%</span>
    <svg class="plug" viewBox="0 0 12 24"><path fill="#fff" d="M2 3h2v5H2zM8 3h2v5H8zM0 8h12v4q0 4-4 5v5H4v-5q-4-1-4-5z"/></svg>
    <svg class="sun" viewBox="0 0 22 22"><defs><linearGradient id="sg" x2="0" y2="1"><stop stop-color="#ffc800"/><stop offset="1" stop-color="#f47b20"/></linearGradient></defs><circle cx="11" cy="11" r="11" fill="url(#sg)"/></svg>
    <span class="temp">106°F</span>
    <div class="icons">
      <svg viewBox="0 0 20 20"><path d="M3 13l7-7 7 7" stroke-width="1.500"/></svg>
      <svg viewBox="0 0 20 20"><rect x="4" y="5" width="9" height="10" rx="1"/><path d="M13 9l3-2v6l-3-2M5 2.500q4-2 8 0M5 17.500q4 2 8 0"/></svg>
      <svg viewBox="0 0 20 20"><path d="M3 18Q3 4 18 3" stroke="#999"/><path d="M7 18Q7 8 18 7M11 18q0-6 7-7M15 18q0-3 3-3"/></svg>
      <svg viewBox="0 0 20 20"><path fill="#bdbdbd" stroke="none" d="M4 14a4 4 0 0 1 0-8q3-5 7-3 3 1 4 4 4 1 4 4t-4 3z"/><circle cx="14" cy="14" r="5.500" fill="#e0232e" stroke="none"/><path d="M12 12l4 4M16 12l-4 4" stroke-width="1.600"/></svg>
      <svg viewBox="0 0 20 20"><path d="M1 4l17-3v12M1 4v14h11M6 9q3-4 7-1M6 13q3 3 6 0M13 5v3h-3"/><circle cx="16" cy="15" r="4" fill="#2a74c8" stroke="none"/></svg>
      <svg viewBox="0 0 20 20"><path d="M1 8h3l4-4v12l-4-4H1zM11 7q2 3 0 6M14 5q3 5 0 10M17 3q4 7 0 14"/></svg>
      <svg viewBox="0 0 20 20"><path d="M5 6h13v9H5z"/><path d="M7 8h9v5H7z" fill="#fff"/><path d="M1 3h5v4H3.500L1 5zM19 9v3"/></svg>
      <svg viewBox="0 0 20 20"><path d="M18 2L6 12l-2 4 5-1L19 4zM4 16q-4 3 2 3t3-4M12 12q6-4 5 1t-5 0"/></svg>
    </div>
    <time>2:33 PM<br>9/3/2022</time>
    <svg class="note" viewBox="0 0 24 24"><path fill="#fff" d="M1 2h20v12l-5 6h-6l-4 4v-4H1z"/><path d="M5 7h12M5 11h12M5 15h8" stroke="#23272c" stroke-width="1.600"/><circle cx="18" cy="17" r="5" fill="#23272c"/><path d="M17 12a5 5 0 1 0 5 7q-5 0-5-7z" fill="#fff"/></svg>
  </div>
</div>
</div>
</body>
</html>
```
FILE: styles.css
```css
* { box-sizing: border-box; }
body { margin: 0; font: 14px/20px "Noto Sans", "Open Sans", sans-serif; color: #000; background: #f0f0f0; overflow: hidden; }
button, select, input { font: inherit; color: inherit; }
button { border: 0; padding: 0; background: none; }
svg { display: block; flex: none; }
.defs { position: absolute; width: 0; height: 0; }
.app { display: flex; flex-direction: column; min-height: 100vh; }

/* title bar and menus */
.titlebar { display: flex; align-items: center; height: 29px; padding: 0 4px 1px 2px; background: #fff; }
.titlebar h1 { flex: 1; margin: 0 0 0 5px; font-size: 14px; font-weight: 400; line-height: 28px; }
.appicon { width: 20px; height: 20px; }
.titlebar button { display: grid; place-items: center; width: 58px; height: 28px; }
.titlebar button svg { width: 14px; height: 14px; }
.menubar { display: flex; height: 24px; background: #fff; }
.menubar > button, .menubar .open { height: 24px; padding: 0 7px; line-height: 24px; }
.menubar > button:nth-child(-n+3), .menuhost { margin-right: 1px; }
.menuhost { position: relative; }
.menubar .open { background: #cce8ff; box-shadow: inset 0 0 0 1px #99d1ff; }
.menu { position: absolute; z-index: 5; left: 0; top: 24px; width: 371px; padding: 2px; background: linear-gradient(90deg, #f0f0f0 38px, #f2f2f2 38px); border: 1px solid #ccc; box-shadow: 4px 4px 4px rgba(0, 0, 0, .5); }
.menu button { display: flex; align-items: center; width: 100%; height: 30px; padding: 0 20px 0 3px; text-align: left; white-space: nowrap; }
.menu button.plain { height: 24px; }
.menu .sub { padding-right: 7px; }
.menu .hot { background: #91c9f7; }
.menu button > svg { width: 24px; height: 24px; }
.menu button > .more { width: 12px; height: 12px; }
.menu span { flex: 1; margin-left: 13px; padding-top: 2px; }
.menu kbd { padding-top: 2px; font: inherit; }
.menu hr { height: 1px; margin: 3px 0 3px 36px; border: 0; background: #d7d7d7; }
.bigt { font: 700 26px "Liberation Sans", sans-serif; fill: #545454; text-anchor: middle; }

/* toolbars */
.toolbar { display: flex; align-items: center; height: 45px; padding: 0 0 2px 2px; }
.toolbar.second { height: 40px; padding: 0 0 2px 4px; }
.toolbar > button { display: grid; place-items: center; flex: none; width: 39px; height: 35px; }
.toolbar button svg, .tools button svg { width: 24px; height: 24px; }
.toolbar .sep { flex: none; width: 1px; height: 32px; margin: 0 4px; background: #8a8a8a; }
.combo { display: flex; align-items: center; flex: none; height: 28px; margin: 0 2px; padding: 0 4px 0 0; background: #e1e1e1; border: 1px solid #adadad; }
.combo select { appearance: none; flex: 1; min-width: 0; height: 26px; padding: 0 3px; border: 0; background: none; line-height: 24px; outline: 0; }
.combo svg { width: 12px; height: 12px; }
.combo.track { width: 214px; }
.combo.viasize { width: 206px; }
.combo.gridsize { width: 211px; }
.combo.zoom { width: 119px; }
.combo.layer { width: 159px; height: 26px; margin: 0 1px 0 3px; background: #fff; border-color: #7a7a7a; }
.combo.layer select { height: 24px; padding-left: 6px; }
.chip { width: 14px; height: 14px; margin-left: 7px; background: #c83434; border: 1px solid #000; }

/* workspace */
.workspace { display: flex; flex: 1; }
.tools { display: flex; flex-direction: column; flex: none; width: 42px; padding: 4px 3px; }
.tools button { display: grid; place-items: center; width: 36px; height: 35px; margin: 2px 0; }
.tools .on { background: #c0dcf3; border: 1px solid #90c8f6; }
.tools .fly { background: linear-gradient(135deg, transparent 50%, #000 50%) right bottom / 8px 8px no-repeat; }
.tools .sep { height: 1px; margin: 4px 2px; background: #8a8a8a; }
.unit { font: 12px "Open Sans", sans-serif; fill: #545454; text-anchor: middle; font-weight: 600; }
.view { flex: 1; display: grid; grid-template: minmax(0, 1fr) 20px / minmax(0, 1fr) 20px; gap: 1px; border: 1px solid #a0a0a0; }
.board { width: 100%; height: 100%; background: #001023; overflow: hidden; box-shadow: 1px 1px #fff; }
.silk { font: 300 15px Roboto, sans-serif; }
.vbar, .lbar { display: grid; justify-items: center; align-items: center; }
.vbar { grid-template-rows: 22px 382fr 21px 355fr 22px; }
.vbar i { grid-row: 3; align-self: stretch; width: 19px; background: #cdcdcd; }
.vbar svg:last-child { grid-row: 5; }
.vbar svg, .hbar svg, .lbar svg { width: 12px; height: 12px; }
.hbar { display: grid; align-items: center; justify-items: center; grid-template-columns: 20px 780fr 81px 644fr 22px; }
.hbar i { grid-column: 3; justify-self: stretch; height: 19px; background: #cdcdcd; }
.hbar .right { grid-column: 5; transform: rotate(-90deg); }
.left { transform: rotate(90deg); }
.up { transform: rotate(180deg); }

/* dock */
.dock { flex: none; display: flex; flex-direction: column; width: 266px; border-left: 5px solid #dcdcdc; }
.dock h2 { margin: 0; padding: 0 0 2px 4px; font-size: 14px; font-weight: 400; line-height: 23px; background: #b9b9b9; color: #222; }
.appearance { border-left: 1px solid #c4c4c4; padding-right: 2px; }
.tabs { display: flex; align-items: flex-end; height: 28px; }
.tabs button { height: 26px; padding: 1px 5px 0; border: 1px solid #dcdcdc; border-width: 1px 1px 1px 0; text-align: left; }
.tabs .sel { width: 62px; height: 28px; padding: 0 7px 2px; background: #fff; border-bottom: 0; border-top: 0; }
.tabs button:nth-child(2) { width: 61px; }
.tabs button:nth-child(3) { width: 58px; padding-left: 6px; }
.page { padding: 1px 1px 0 3px; background: #fff; border-right: 1px solid #dcdcdc; border-bottom: 1px solid #dcdcdc; }
.listbox { display: flex; background: #f0f0f0; }
.layers { flex: 1; margin: 0; padding: 0 0 2px; list-style: none; font-size: 12px; border-right: 1px solid #fff; }
.layers li { display: flex; align-items: center; height: 20px; padding: 2px 0 0 18px; line-height: 18px; }
.layers i { width: 16px; height: 15px; margin: 0 6px 1px 0; }
.layers svg { width: 17px; height: 17px; margin-right: 4px; }
.layers .cur { padding-left: 6px; background: #e1e1e1; }
.layers .cur::before { content: ""; width: 6px; height: 12px; margin: 0 6px 2px 0; background: #3c3cff; clip-path: polygon(0 0, 100% 50%, 0 100%); }
.lbar { width: 19px; grid-template-rows: 21px 423fr 57fr 21px; }
.lbar i { align-self: stretch; width: 19px; background: #cdcdcd; }
.lbar svg:last-child { grid-row: 4; }
.expander { display: flex; align-items: center; gap: 3px; height: 28px; padding: 2px 0 0 8px; font-size: 12px; }
.expander svg { width: 5px; height: 9px; }
.presetlabel { display: block; padding: 2px 0 0 6px; font-size: 12px; line-height: 20px; }
.combo.preset { margin: 0 4px 9px 6px; }
.dock .filterhead { border-top: 5px solid #dcdcdc; }
.filter { display: grid; grid-template-columns: 105px 1fr; padding: 5px 0 4px 4px; border-left: 1px solid #c4c4c4; font-size: 12px; }
.filter label { display: flex; align-items: center; gap: 3px; height: 20px; padding-top: 1px; }
.filter input { appearance: none; display: grid; place-items: center; flex: none; width: 16px; height: 16px; margin: 0; border: 1px solid #333; background: #fff; }
.filter input:checked::before { content: ""; width: 11px; height: 9px; background: #333; clip-path: polygon(0 55%, 10% 42%, 36% 74%, 90% 0, 100% 10%, 37% 100%); }

/* message panel and status bar */
.info { display: grid; grid-template-columns: 63px 111px 110px 95px minmax(0, 825fr) minmax(0, 702fr); height: 42px; padding: 1px 0 0 14px; line-height: 20px; white-space: nowrap; overflow: hidden; border-bottom: 1px solid #d7d7d7; }
.info div { overflow: hidden; }
.status { display: grid; grid-template-columns: minmax(0, 585fr) 98px 203px 321px 234px 77px 215px minmax(0, 187fr); height: 26px; padding: 1px 0; line-height: 24px; white-space: pre; }
.status span { padding-left: 4px; border-right: 1px solid #d7d7d7; overflow: hidden; }
.status span:first-child { padding-left: 2px; }
.status span:last-child { border: 0; }

/* taskbar */
.taskbar { display: flex; align-items: center; height: 50px; color: #fff; background: linear-gradient(90deg, #1b212a 0, #1b212a 26%, #2a2030 32%, #33281f 42%, #27251f 50%, #1c2d30 60%, #1e2a33 67%, #2f1f2c 71%, #38231a 77%, #2a2322 84%, #1c2430 100%); }
.start { display: grid; place-items: center; width: 60px; height: 50px; }
.start svg { width: 20px; height: 20px; }
.search { display: flex; align-items: center; width: 430px; height: 50px; padding-left: 14px; background: #f1f1f1; border: 1px solid #ccc; }
.glass { width: 22px; height: 22px; }
.search input { flex: 1; min-width: 0; height: 40px; padding: 0 0 0 13px; border: 0; background: none; font-size: 18px; outline: 0; }
.search input::placeholder { color: #333; opacity: 1; }
.bird { width: 96px; height: 48px; margin-right: 1px; }
.apps { display: flex; flex: 1; }
.apps button { display: grid; place-items: center; width: 62px; height: 50px; padding-top: 2px; }
.apps svg { width: 30px; height: 30px; }
.apps .run { background: linear-gradient(#76b9ed, #76b9ed) center bottom / 51px 3px no-repeat; }
.apps .active { background: linear-gradient(#76b9ed, #76b9ed) center bottom / 60px 3px no-repeat, #4a5055; }
.tray { display: flex; align-items: center; padding-right: 28px; }
.battery { width: 62px; height: 26px; border: 3px solid #fff; background: #1b9c4a; font-size: 16px; line-height: 20px; text-align: center; }
.plug { width: 12px; height: 24px; margin: 0 32px 0 9px; }
.sun { width: 22px; height: 22px; }
.temp { margin: 0 25px 0 14px; font-size: 16px; line-height: 24px; }
.icons { display: flex; gap: 20px; }
.icons svg { width: 20px; height: 20px; fill: none; stroke: #fff; stroke-width: 1.3; }
.tray time { width: 100px; margin-left: 8px; font-size: 14px; line-height: 23px; text-align: center; }
.note { width: 24px; height: 24px; margin-left: 8px; }
```
